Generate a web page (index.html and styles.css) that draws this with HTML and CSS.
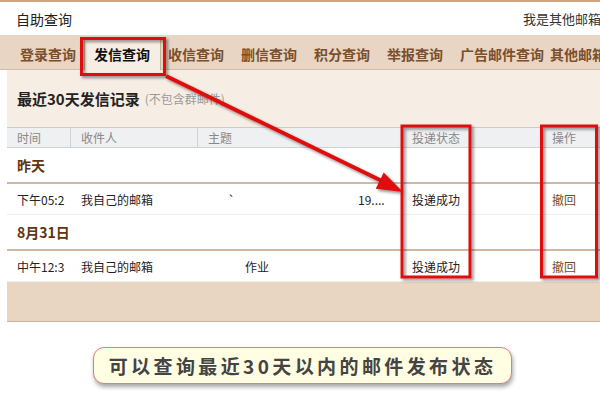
FILE: index.html
```html
<!DOCTYPE html>
<html lang="zh-CN">
<head>
<meta charset="utf-8">
<title>自助查询</title>
<link rel="stylesheet" href="styles.css">
</head>
<body>
<div class="page">
  <header class="topbar">
    <span class="title">自助查询</span>
    <span class="other">我是其他邮箱的用户</span>
  </header>
  <nav class="tabs">
    <span class="tab">登录查询</span>
    <span class="tab active">发信查询</span>
    <span class="tab">收信查询</span>
    <span class="tab">删信查询</span>
    <span class="tab">积分查询</span>
    <span class="tab">举报查询</span>
    <span class="tab tight-r">广告邮件查询</span>
    <span class="tab tight-l">其他邮箱查询</span>
  </nav>
  <main class="main">
    <div class="summary"><b class="summary-title">最近30天发信记录</b><span class="note">(不包含群邮件)</span></div>
    <div class="grid head">
      <span class="cell">时间</span>
      <span class="cell">收件人</span>
      <span class="cell span2">主题</span>
      <span class="cell">投递状态</span>
      <span class="cell last">操作</span>
    </div>
    <div class="group">昨天</div>
    <div class="grid row">
      <span class="cell">下午05:2</span>
      <span class="cell">我自己的邮箱</span>
      <span class="cell subj-a">`</span>
      <span class="cell">19....</span>
      <span class="cell">投递成功</span>
      <span class="cell action">撤回</span>
    </div>
    <div class="group">8月31日</div>
    <div class="grid row">
      <span class="cell">中午12:3</span>
      <span class="cell">我自己的邮箱</span>
      <span class="cell subj-b">作业</span>
      <span class="cell"></span>
      <span class="cell">投递成功</span>
      <span class="cell action">撤回</span>
    </div>
    <div class="footer"></div>
  </main>
  <div class="caption-wrap">
    <div class="caption">可以查询最近30天以内的邮件发布状态</div>
  </div>
  <svg class="annot" width="600" height="400" viewBox="0 0 600 400">
    <defs>
      <filter id="sh" x="-20%" y="-20%" width="140%" height="140%">
        <feDropShadow dx="2" dy="2" stdDeviation="1.5" flood-color="#000" flood-opacity="0.45"/>
      </filter>
    </defs>
    <g filter="url(#sh)" fill="none" stroke="#e01010" stroke-width="3">
      <rect x="81.5" y="38.5" width="83" height="36"/>
      <rect x="402" y="126" width="68" height="151"/>
      <rect x="541.5" y="126" width="55" height="151"/>
      <line x1="166" y1="76" x2="384" y2="182" stroke-width="4"/>
      <polygon points="403,192 375.7,188.7 383.7,172.5" fill="#e01010" stroke="none"/>
    </g>
  </svg>
</div>
</body>
</html>
```
FILE: styles.css
```css
* { box-sizing: border-box; }
html, body { margin: 0; padding: 0; background: #fff; }
.page {
  position: relative;
  width: 600px;
  height: 400px;
  overflow: hidden;
  font-family: "Noto Sans CJK SC", "Noto Sans", sans-serif;
  color: #222;
}
.topbar {
  height: 35px;
  border-top: 2px solid #cfa57f;
  display: flex;
  align-items: center;
  justify-content: space-between;
  padding: 0 0 0 16px;
  white-space: nowrap;
}
.title { font-size: 14px; color: #222; }
.other { font-size: 13px; color: #333; margin-right: -40px; }
.tabs {
  height: 35px;
  background: #e8d5c3;
  border-bottom: 1px solid #d4bca6;
  display: flex;
  align-items: flex-end;
  padding-left: 11.5px;
  white-space: nowrap;
}
.tab {
  font-size: 14px;
  font-weight: bold;
  color: #7b4f2c;
  padding: 0 8.5px;
  height: 30px;
  line-height: 30px;
  flex: none;
}
.tab.active {
  color: #111;
  background: #f6ede4;
  border: 1px solid #c9b199;
  border-bottom: none;
  padding: 0 9.5px;
  margin: 0 -1px -1px;
  height: 32px;
  line-height: 30px;
}
.tab.tight-r { padding-right: 0; }
.tab.tight-l { padding-left: 6px; }
.main { margin-left: 7px; }
.summary {
  height: 57px;
  background: #f6ede4;
  display: flex;
  align-items: center;
  padding-left: 10px;
}
.summary-title { font-size: 15px; color: #222; }
.note { font-size: 12px; color: #9a9a9a; margin-left: 5px; }
.grid {
  display: grid;
  grid-template-columns: 64px 127px 150px 54px 140px 1fr;
  align-items: center;
  white-space: nowrap;
}
.cell { padding-left: 10px; overflow: hidden; }
.head {
  height: 21px;
  background: #eef0f2;
  border-top: 1px solid #c9cbce;
  border-bottom: 1px solid #cfd2d5;
  font-size: 12px;
  color: #888;
  align-items: stretch;
}
.head .cell {
  border-right: 1px solid #cfd2d5;
  line-height: 19px;
}
.head .cell.last { border-right: none; }
.head .span2 { grid-column: span 2; }
.group {
  height: 36px;
  background: #fff;
  border-bottom: 2px solid #cdb9a5;
  font-size: 14px;
  font-weight: bold;
  color: #5e3510;
  display: flex;
  align-items: center;
  padding-left: 10px;
}
.row {
  height: 31px;
  font-size: 12px;
  color: #222;
  border-bottom: 1px solid #eeeeee;
}
.row:last-of-type { border-bottom: none; }
.action { color: #7a4a1c; }
.subj-a { padding-left: 30px; }
.subj-b { padding-left: 47px; }
.footer {
  height: 40px;
  background: #e8d5c2;
  border-bottom: 1px solid #cdb29a;
}
.caption-wrap {
  display: flex;
  padding: 25px 0 0 93px;
}
.caption {
  width: 419px;
  height: 37px;
  border: 1px solid #d38383;
  border-radius: 11px;
  background: #fffde2;
  box-shadow: 1px 3px 4px rgba(0,0,0,0.35);
  font-size: 19px;
  font-weight: bold;
  letter-spacing: 3.4px;
  color: #444;
  display: flex;
  align-items: center;
  justify-content: center;
  white-space: nowrap;
}
.annot {
  position: absolute;
  left: 0;
  top: 0;
  pointer-events: none;
}
```
